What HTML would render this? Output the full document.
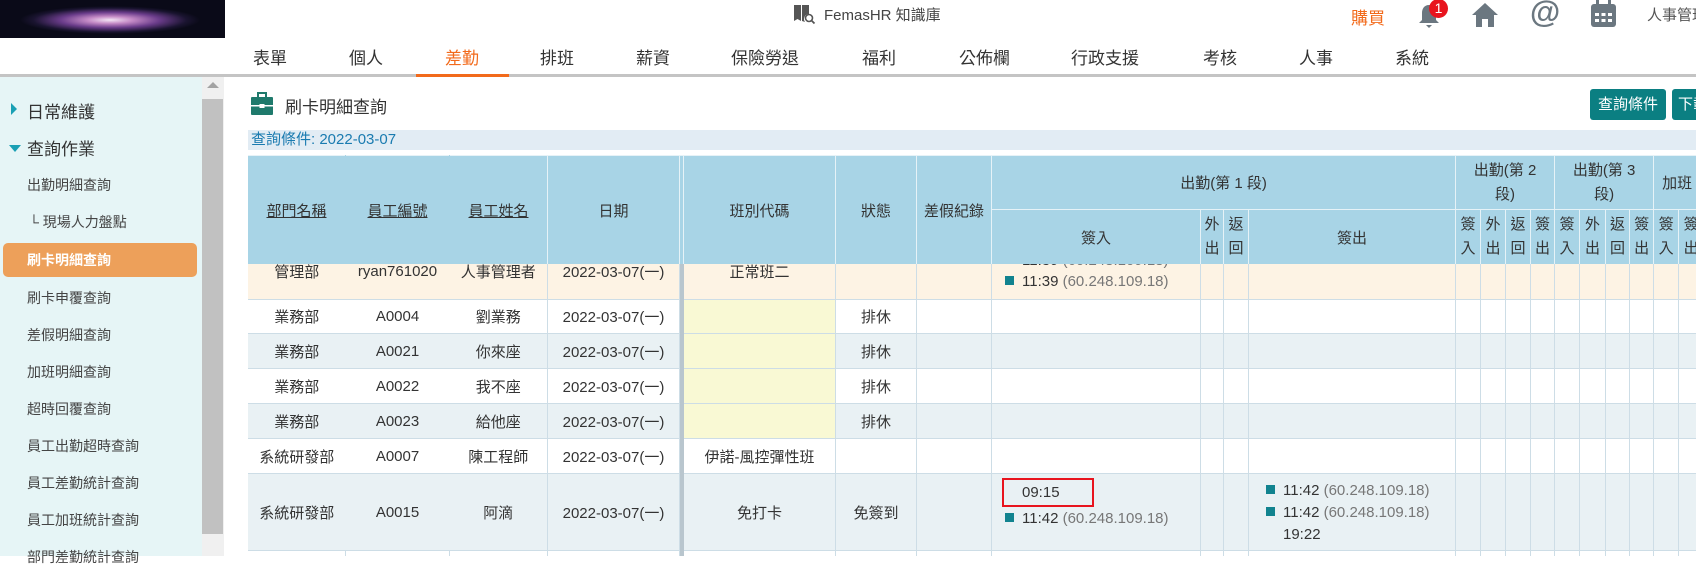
<!DOCTYPE html>
<html><head><meta charset="utf-8">
<style>
*{box-sizing:border-box;margin:0;padding:0}
body{width:1696px;height:556px;overflow:hidden;background:#fff;font-family:"Liberation Sans","Noto Sans CJK TC",sans-serif;color:#333;position:relative}
.a{position:absolute;white-space:nowrap}
.nav{top:44px;font-size:17px;color:#333}
.side{font-size:14px;color:#444;left:27px}
table{border-collapse:collapse;table-layout:fixed}
td,th{border:1px solid #cddde6;text-align:center;font-weight:normal;font-size:15px;overflow:hidden;white-space:nowrap}
.hd th{background:#a8d4e6;border-color:#e6f2f7;color:#333}
.hd u{text-decoration:underline}
.sep{background:#b9c6ce;border-color:#b9c6ce;padding:0}
.v{line-height:24px;white-space:normal;font-size:15px}
.sq{display:inline-block;width:9px;height:9px;background:#11838f;margin-right:8px;vertical-align:1px}
.ip{color:#777}
.tl{text-align:left;padding-left:13px}
</style></head><body>
<div class="a" style="left:0;top:0;width:225px;height:38px;background:radial-gradient(ellipse 90px 14px at 110px 20px,#f3e6f5 0%,#c48ac6 25%,#6a3c8a 55%,#1a1430 85%,#0a0a18 100%),#0a0a18"></div>
<svg class="a" style="left:792px;top:3px" width="24" height="22" viewBox="0 0 24 22"><path d="M2 2h7v16l-3.5-2L2 18z M10 2h7v9a5 5 0 0 0-4 8l-3-1z" fill="#555"/><circle cx="17" cy="15" r="3.5" fill="none" stroke="#555" stroke-width="1.6"/><path d="M19.5 17.5l3 3" stroke="#555" stroke-width="1.8"/></svg>
<div class="a" style="left:824px;top:4px;font-size:15px;color:#444">FemasHR 知識庫</div>
<div class="a" style="left:1351px;top:4px;font-size:17px;color:#f26a1b">購買</div>
<svg class="a" style="left:1416px;top:2px" width="26" height="28" viewBox="0 0 26 28"><path d="M13 3c-5 0-7 4-7 8v7l-3 3h20l-3-3v-7c0-4-2-8-7-8z" fill="#6b7780"/><path d="M10 23h6l-3 3z" fill="#6b7780"/></svg>
<div class="a" style="left:1429px;top:-1px;width:19px;height:19px;border-radius:50%;background:#e8141e;color:#fff;font-size:14px;text-align:center;line-height:19px">1</div>
<svg class="a" style="left:1471px;top:2px" width="28" height="26" viewBox="0 0 28 26"><path d="M14 1L1 13h4v12h6v-8h6v8h6V13h4z" fill="#6b7780"/></svg>
<div class="a" style="left:1530px;top:-6px;font-size:31px;font-weight:bold;color:#6b7780">@</div>
<svg class="a" style="left:1590px;top:0px" width="27" height="28" viewBox="0 0 27 28"><rect x="1" y="4" width="25" height="23" rx="3" fill="#6b7780"/><rect x="6" y="0" width="3" height="6" fill="#6b7780"/><rect x="18" y="0" width="3" height="6" fill="#6b7780"/><g fill="#fff"><rect x="5" y="13" width="4" height="3"/><rect x="11.5" y="13" width="4" height="3"/><rect x="18" y="13" width="4" height="3"/><rect x="5" y="19" width="4" height="3"/><rect x="11.5" y="19" width="4" height="3"/><rect x="18" y="19" width="4" height="3"/></g></svg>
<div class="a" style="left:1647px;top:4px;font-size:15px;color:#555">人事管理</div>
<div class="a nav" style="left:253px">表單</div>
<div class="a nav" style="left:349px">個人</div>
<div class="a nav" style="left:445px;color:#f26a1b">差勤</div>
<div class="a nav" style="left:540px">排班</div>
<div class="a nav" style="left:636px">薪資</div>
<div class="a nav" style="left:731px">保險勞退</div>
<div class="a nav" style="left:862px">福利</div>
<div class="a nav" style="left:959px">公佈欄</div>
<div class="a nav" style="left:1071px">行政支援</div>
<div class="a nav" style="left:1203px">考核</div>
<div class="a nav" style="left:1299px">人事</div>
<div class="a nav" style="left:1395px">系統</div>
<div class="a" style="left:0;top:74px;width:1696px;height:3px;background:#c4c4c4"></div>
<div class="a" style="left:416px;top:74px;width:93px;height:3px;background:#f26a1b"></div>
<div class="a" style="left:0;top:77px;width:202px;height:479px;background:#e6f5f6"></div>
<div class="a" style="left:202px;top:77px;width:22px;height:479px;background:#f0f0f0"></div>
<div class="a" style="left:202px;top:99px;width:21px;height:435px;background:#c1c1c1"></div>
<div class="a" style="left:207px;top:82px;width:0;height:0;border-left:6px solid transparent;border-right:6px solid transparent;border-bottom:6px solid #a3a3a3"></div>
<div class="a" style="left:11px;top:103px;width:0;height:0;border-top:6px solid transparent;border-bottom:6px solid transparent;border-left:6px solid #1aa0b4"></div>
<div class="a" style="left:27px;top:98px;font-size:17px;color:#333">日常維護</div>
<div class="a" style="left:9px;top:145px;width:0;height:0;border-left:6px solid transparent;border-right:6px solid transparent;border-top:7px solid #1aa0b4"></div>
<div class="a" style="left:27px;top:135px;font-size:17px;color:#333">查詢作業</div>
<div class="a side" style="top:175px">出勤明細查詢</div>
<div class="a side" style="top:212px;left:29px">└ 現場人力盤點</div>
<div class="a" style="left:3px;top:243px;width:194px;height:34px;background:#eda05a;border-radius:5px"></div>
<div class="a side" style="top:250px;color:#fff;font-weight:bold">刷卡明細查詢</div>
<div class="a side" style="top:288px">刷卡申覆查詢</div>
<div class="a side" style="top:325px">差假明細查詢</div>
<div class="a side" style="top:362px">加班明細查詢</div>
<div class="a side" style="top:399px">超時回覆查詢</div>
<div class="a side" style="top:436px">員工出勤超時查詢</div>
<div class="a side" style="top:473px">員工差勤統計查詢</div>
<div class="a side" style="top:510px">員工加班統計查詢</div>
<div class="a side" style="top:547px">部門差勤統計查詢</div>
<svg class="a" style="left:250px;top:92px" width="24" height="24" viewBox="0 0 24 24"><rect x="8" y="1" width="8" height="5" fill="none" stroke="#1f7a6c" stroke-width="2"/><rect x="1" y="5" width="22" height="18" rx="1" fill="#1f7a6c"/><rect x="1" y="13" width="22" height="1.5" fill="#fff"/><rect x="9.5" y="12" width="5" height="4" fill="#fff"/></svg>
<div class="a" style="left:285px;top:93px;font-size:17px;color:#333">刷卡明細查詢</div>
<div class="a" style="left:1590px;top:89px;width:76px;height:31px;background:#0b7f82;border-radius:3px;color:#fff;font-size:15px;line-height:31px;text-align:center">查詢條件</div>
<div class="a" style="left:1672px;top:89px;width:40px;height:31px;background:#0b7f82;border-radius:3px;color:#fff;font-size:15px;line-height:31px;padding-left:6px">下載</div>
<div class="a" style="left:248px;top:130px;width:1448px;height:20px;background:#e2ecf4"></div>
<div class="a" style="left:251px;top:130px;font-size:15px;color:#1a7bb0;line-height:20px">查詢條件: 2022-03-07</div>
<div class="a" style="left:248px;top:155px;width:1448px;height:109px;overflow:hidden">
<table class="hd" style="width:1480px;margin-left:-1px">
<colgroup><col style="width:98px"><col style="width:104px"><col style="width:98px"><col style="width:132px"><col style="width:4px"><col style="width:152px"><col style="width:81px"><col style="width:75px"><col style="width:209px"><col style="width:23px"><col style="width:25px"><col style="width:207px"><col style="width:25px"><col style="width:25px"><col style="width:25px"><col style="width:24px"><col style="width:25px"><col style="width:26px"><col style="width:24px"><col style="width:24px"><col style="width:25px"><col style="width:25px"><col style="width:25px"></colgroup>
<tr style="height:54px"><th rowspan="2" style="border-right-color:#a8d4e6"><u>部門名稱</u></th><th rowspan="2" style="border-left-color:#a8d4e6;border-right-color:#a8d4e6"><u>員工編號</u></th><th rowspan="2" style="border-left-color:#a8d4e6"><u>員工姓名</u></th><th rowspan="2">日期</th><th rowspan="2" class="sep"></th><th rowspan="2">班別代碼</th><th rowspan="2">狀態</th><th rowspan="2">差假紀錄</th><th colspan="4">出勤(第 1 段)</th><th colspan="4" class="v">出勤(第 2<br>段)</th><th colspan="4" class="v">出勤(第 3<br>段)</th><th colspan="3" style="text-align:left;padding-left:8px">加班</th></tr>
<tr style="height:55px"><th>簽入</th><th class="v">外<br>出</th><th class="v">返<br>回</th><th>簽出</th><th class="v">簽<br>入</th><th class="v">外<br>出</th><th class="v">返<br>回</th><th class="v">簽<br>出</th><th class="v">簽<br>入</th><th class="v">外<br>出</th><th class="v">返<br>回</th><th class="v">簽<br>出</th><th class="v">簽<br>入</th><th class="v">簽<br>出</th><th></th></tr>
</table></div>
<div class="a" style="left:248px;top:264px;width:1448px;height:292px;overflow:hidden">
<table style="width:1480px;margin-left:-1px;margin-top:-22px">
<colgroup><col style="width:98px"><col style="width:104px"><col style="width:98px"><col style="width:132px"><col style="width:4px"><col style="width:152px"><col style="width:81px"><col style="width:75px"><col style="width:209px"><col style="width:23px"><col style="width:25px"><col style="width:207px"><col style="width:25px"><col style="width:25px"><col style="width:25px"><col style="width:24px"><col style="width:25px"><col style="width:26px"><col style="width:24px"><col style="width:24px"><col style="width:25px"><col style="width:25px"><col style="width:25px"></colgroup>
<tr style="height:57px;background:#fdf3e4"><td style="border-right:0">管理部</td><td style="border-left:0;border-right:0">ryan761020</td><td style="border-left:0">人事管理者</td><td>2022-03-07(一)</td><td class="sep"></td><td>正常班二</td><td></td><td></td><td class="tl" style="line-height:21px"><span class="sq"></span>11:39 <span class="ip">(60.248.109.18)</span><br><span class="sq"></span>11:39 <span class="ip">(60.248.109.18)</span></td><td></td><td></td><td></td><td></td><td></td><td></td><td></td><td></td><td></td><td></td><td></td><td></td><td></td><td></td></tr>
<tr style="height:34px"><td style="border-right:0">業務部</td><td style="border-left:0;border-right:0">A0004</td><td style="border-left:0">劉業務</td><td>2022-03-07(一)</td><td class="sep"></td><td style="background:#f9f9d4"></td><td>排休</td><td></td><td></td><td></td><td></td><td></td><td></td><td></td><td></td><td></td><td></td><td></td><td></td><td></td><td></td><td></td><td></td></tr>
<tr style="height:35px;background:#e9f1f4"><td style="border-right:0">業務部</td><td style="border-left:0;border-right:0">A0021</td><td style="border-left:0">你來座</td><td>2022-03-07(一)</td><td class="sep"></td><td style="background:#f9f9d4"></td><td>排休</td><td></td><td></td><td></td><td></td><td></td><td></td><td></td><td></td><td></td><td></td><td></td><td></td><td></td><td></td><td></td><td></td></tr>
<tr style="height:35px"><td style="border-right:0">業務部</td><td style="border-left:0;border-right:0">A0022</td><td style="border-left:0">我不座</td><td>2022-03-07(一)</td><td class="sep"></td><td style="background:#f9f9d4"></td><td>排休</td><td></td><td></td><td></td><td></td><td></td><td></td><td></td><td></td><td></td><td></td><td></td><td></td><td></td><td></td><td></td><td></td></tr>
<tr style="height:35px;background:#e9f1f4"><td style="border-right:0">業務部</td><td style="border-left:0;border-right:0">A0023</td><td style="border-left:0">給他座</td><td>2022-03-07(一)</td><td class="sep"></td><td style="background:#f9f9d4"></td><td>排休</td><td></td><td></td><td></td><td></td><td></td><td></td><td></td><td></td><td></td><td></td><td></td><td></td><td></td><td></td><td></td><td></td></tr>
<tr style="height:35px"><td style="border-right:0">系統研發部</td><td style="border-left:0;border-right:0">A0007</td><td style="border-left:0">陳工程師</td><td>2022-03-07(一)</td><td class="sep"></td><td>伊諾-風控彈性班</td><td></td><td></td><td></td><td></td><td></td><td></td><td></td><td></td><td></td><td></td><td></td><td></td><td></td><td></td><td></td><td></td><td></td></tr>
<tr style="height:77px;background:#e9f1f4"><td style="border-right:0">系統研發部</td><td style="border-left:0;border-right:0">A0015</td><td style="border-left:0">阿滴</td><td>2022-03-07(一)</td><td class="sep"></td><td>免打卡</td><td>免簽到</td><td></td><td class="tl" style="line-height:23px;vertical-align:top;padding-top:4px"><span style="display:inline-block;border:2px solid #e8141e;width:92px;height:29px;margin-left:-3px;padding-left:18px;line-height:26px">09:15</span><br><span class="sq"></span>11:42 <span class="ip">(60.248.109.18)</span></td><td></td><td></td><td class="tl" style="line-height:22px;vertical-align:top;padding-top:6px;padding-left:17px"><span class="sq"></span>11:42 <span class="ip">(60.248.109.18)</span><br><span class="sq"></span>11:42 <span class="ip">(60.248.109.18)</span><br><span style="padding-left:17px">19:22</span></td><td></td><td></td><td></td><td></td><td></td><td></td><td></td><td></td><td></td><td></td><td></td></tr>
<tr style="height:30px"><td></td><td></td><td></td><td></td><td class="sep"></td><td></td><td></td><td></td><td></td><td></td><td></td><td></td><td></td><td></td><td></td><td></td><td></td><td></td><td></td><td></td><td></td><td></td><td></td></tr>
</table></div>
</body></html>
